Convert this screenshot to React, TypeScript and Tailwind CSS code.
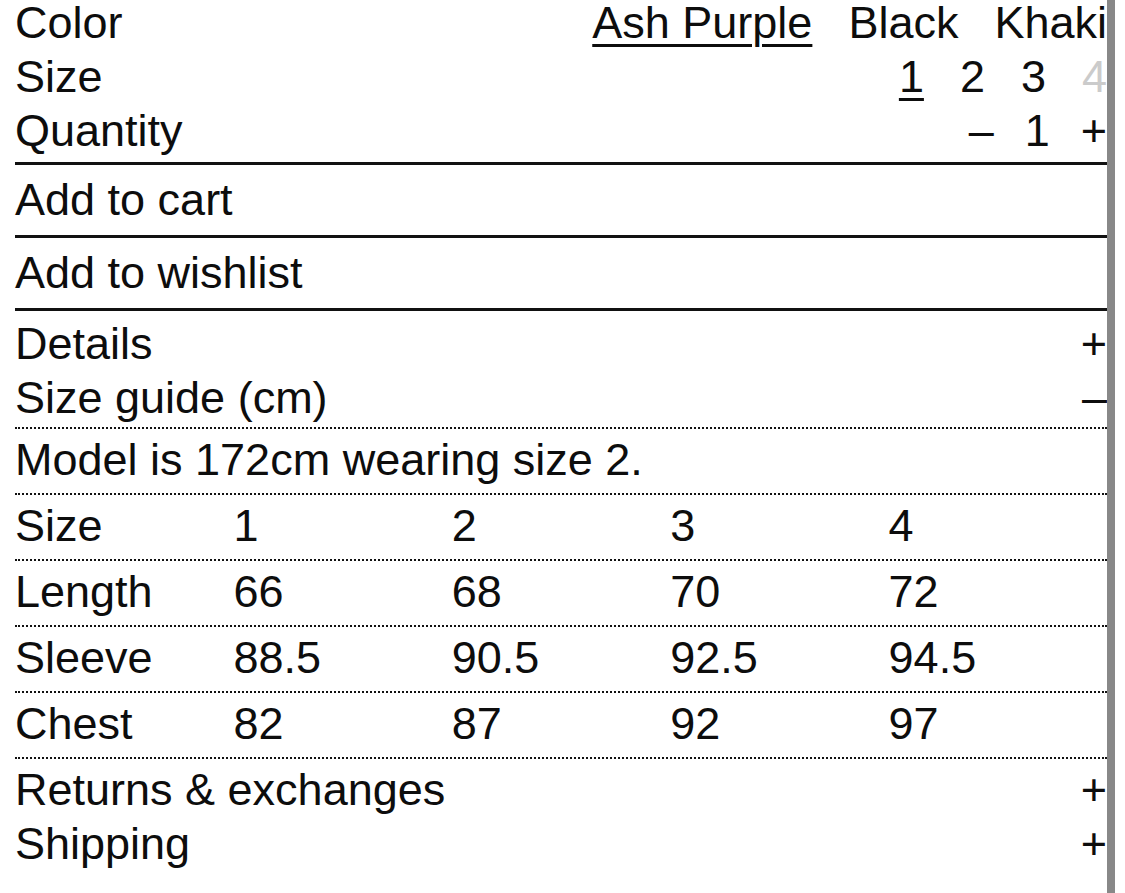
const colors = ["Ash Purple", "Black", "Khaki"];
const sizes = [
  { label: "1", selected: true, soldOut: false },
  { label: "2", selected: false, soldOut: false },
  { label: "3", selected: false, soldOut: false },
  { label: "4", selected: false, soldOut: true },
];

const sizeGuide = [
  { label: "Size", values: ["1", "2", "3", "4"] },
  { label: "Length", values: ["66", "68", "70", "72"] },
  { label: "Sleeve", values: ["88.5", "90.5", "92.5", "94.5"] },
  { label: "Chest", values: ["82", "87", "92", "97"] },
];

const OptionRow = ({ label, children }: { label: string; children: React.ReactNode }) => (
  <div className="flex items-center justify-between leading-[54px]">
    <span>{label}</span>
    <div className="flex items-center">{children}</div>
  </div>
);

export default function App() {
  return (
    <div
      className="flex h-[893px] overflow-hidden bg-white text-[45px] text-[#0d0d0d]"
      style={{ fontFamily: '"Liberation Sans", Arial, sans-serif' }}
    >
      <div className="w-[15px] shrink-0" />
      <div className="w-[1092px] shrink-0 -mt-[4px]">
        <div className="border-b-[3px] border-[#111] pb-[4px]">
          <OptionRow label="Color">
            <div className="flex gap-[36px]">
              {colors.map((c, i) => (
                <button
                  key={c}
                  type="button"
                  className={i === 0 ? "underline decoration-[3px] underline-offset-[6px]" : ""}
                >
                  {c}
                </button>
              ))}
            </div>
          </OptionRow>
          <OptionRow label="Size">
            <div className="flex gap-[36px]">
              {sizes.map((s) => (
                <button
                  key={s.label}
                  type="button"
                  className={
                    s.soldOut
                      ? "text-[#cbcbcb]"
                      : s.selected
                        ? "underline decoration-[3px] underline-offset-[6px]"
                        : ""
                  }
                >
                  {s.label}
                </button>
              ))}
            </div>
          </OptionRow>
          <OptionRow label="Quantity">
            <div className="flex gap-[31px]">
              <button type="button">–</button>
              <span>1</span>
              <button type="button">+</button>
            </div>
          </OptionRow>
        </div>

        <button
          type="button"
          className="block w-full border-b-[3px] border-[#111] py-[8px] text-left leading-[54px]"
        >
          Add to cart
        </button>
        <button
          type="button"
          className="block w-full border-b-[3px] border-[#111] py-[8px] text-left leading-[54px]"
        >
          Add to wishlist
        </button>

        <div className="pt-[6px] pb-[2px]">
          <OptionRow label="Details">
            <span>+</span>
          </OptionRow>
          <OptionRow label="Size guide (cm)">
            <span>–</span>
          </OptionRow>
        </div>

        <div className="border-t-2 border-dotted border-[#111]">
          <div className="border-b-2 border-dotted border-[#111] pt-[4px] pb-[6px] leading-[54px]">
            Model is 172cm wearing size 2.
          </div>
          {sizeGuide.map((row) => (
            <div
              key={row.label}
              className="grid grid-cols-5 border-b-2 border-dotted border-[#111] pt-[4px] pb-[6px] leading-[54px]"
            >
              <span>{row.label}</span>
              {row.values.map((v, i) => (
                <span key={i}>{v}</span>
              ))}
            </div>
          ))}
        </div>

        <div className="pt-[4px]">
          <OptionRow label="Returns & exchanges">
            <span>+</span>
          </OptionRow>
          <OptionRow label="Shipping">
            <span>+</span>
          </OptionRow>
        </div>
      </div>
      <div className="w-[8px] shrink-0 bg-[#888888]" />
      <div className="flex-1" />
    </div>
  );
}
